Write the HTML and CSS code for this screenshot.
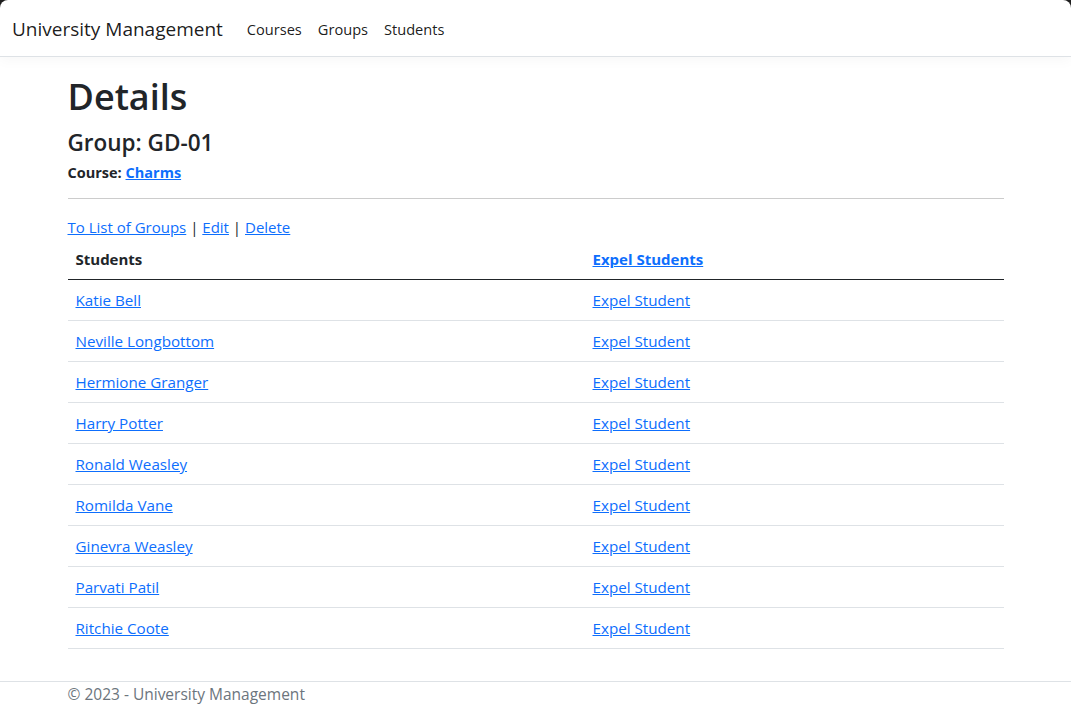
FILE: index.html
```html
<!DOCTYPE html>
<html lang="en">
<head>
<meta charset="utf-8">
<title>Details - University Management</title>
<link rel="stylesheet" href="styles.css">
</head>
<body>
<div class="page">
  <header class="navbar">
    <a class="brand" href="#">University Management</a>
    <nav class="nav">
      <a class="nav-link" href="#">Courses</a>
      <a class="nav-link" href="#">Groups</a>
      <a class="nav-link" href="#">Students</a>
    </nav>
  </header>
  <main class="container main">
    <h1 class="title">Details</h1>
    <h4 class="subtitle">Group: GD-01</h4>
    <div class="course"><span class="label">Course:</span> <a href="#">Charms</a></div>
    <hr class="divider">
    <div class="actions"><a href="#">To List of Groups</a> | <a href="#">Edit</a> | <a href="#">Delete</a></div>
    <table class="table">
      <thead>
        <tr><th class="col-name">Students</th><th><a href="#">Expel Students</a></th></tr>
      </thead>
      <tbody>
        <tr><td><a href="#">Katie Bell</a></td><td><a href="#">Expel Student</a></td></tr>
        <tr><td><a href="#">Neville Longbottom</a></td><td><a href="#">Expel Student</a></td></tr>
        <tr><td><a href="#">Hermione Granger</a></td><td><a href="#">Expel Student</a></td></tr>
        <tr><td><a href="#">Harry Potter</a></td><td><a href="#">Expel Student</a></td></tr>
        <tr><td><a href="#">Ronald Weasley</a></td><td><a href="#">Expel Student</a></td></tr>
        <tr><td><a href="#">Romilda Vane</a></td><td><a href="#">Expel Student</a></td></tr>
        <tr><td><a href="#">Ginevra Weasley</a></td><td><a href="#">Expel Student</a></td></tr>
        <tr><td><a href="#">Parvati Patil</a></td><td><a href="#">Expel Student</a></td></tr>
        <tr><td><a href="#">Ritchie Coote</a></td><td><a href="#">Expel Student</a></td></tr>
      </tbody>
    </table>
  </main>
  <footer class="footer">
    <div class="container">&copy; 2023 - University Management</div>
  </footer>
</div>
</body>
</html>
```
FILE: styles.css
```css
html {
  background: #1e1e1e;
}
body {
  margin: 0;
  font-family: "Open Sans", "Noto Sans", "Liberation Sans", sans-serif;
  font-size: 15.5px;
  line-height: 24px;
  color: #212529;
}
.page {
  background: #fff;
  border-radius: 8px 8px 0 0;
  min-height: 719px;
  overflow: hidden;
}
a {
  color: #0d6efd;
  text-decoration: underline;
}
.navbar {
  display: flex;
  align-items: center;
  height: 56px;
  padding: 0 12px;
  border-bottom: 1px solid #dee2e6;
  box-shadow: 0 4px 12px rgba(0, 0, 0, 0.03);
  margin-bottom: 16px;
}
.brand {
  font-size: 19px;
  line-height: 30px;
  color: rgba(0, 0, 0, 0.9);
  text-decoration: none;
  margin-right: 16px;
  padding-top: 2px;
}
.nav {
  display: flex;
  padding-top: 2px;
}
.nav-link {
  font-size: 14.6px;
  color: rgba(0, 0, 0, 0.9);
  text-decoration: none;
  padding: 8px;
}
.container {
  width: 936px;
  margin: 0 auto;
  padding: 0 12px;
}
.main {
  padding-bottom: 16px;
}
.title {
  font-size: 36px;
  font-weight: 600;
  line-height: 48px;
  margin: 0 0 8px;
}
.subtitle {
  font-size: 22.5px;
  font-weight: 600;
  line-height: 27px;
  margin: 0 0 6px;
}
.course {
  font-size: 14.5px;
  font-weight: 700;
  line-height: 21px;
}
.divider {
  border: 0;
  border-top: 1px solid #ccc;
  margin: 15px 0 16px;
}
.actions {
  font-size: 15px;
  line-height: 24px;
}
.table {
  width: 100%;
  border-collapse: collapse;
  margin-bottom: 16px;
}
.table th,
.table td {
  text-align: left;
  padding: 8px;
  line-height: 24px;
  border-bottom: 1px solid #dee2e6;
  vertical-align: top;
}
.table th {
  font-weight: 700;
  font-size: 15px;
  border-bottom: 1px solid #212529;
}
.col-name {
  width: 501px;
}
.table td {
  font-size: 15.2px;
}
.footer {
  border-top: 1px solid #dee2e6;
  color: #6c757d;
  line-height: 24px;
  padding-bottom: 12px;
}
```
